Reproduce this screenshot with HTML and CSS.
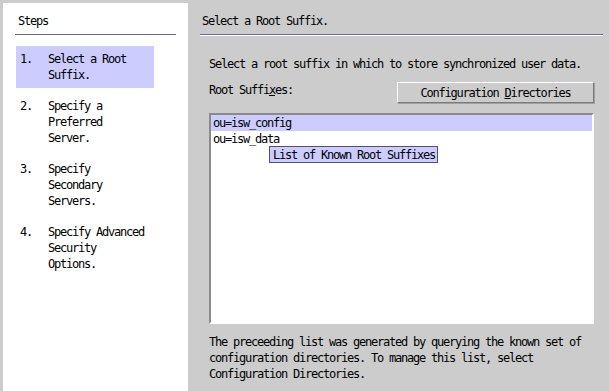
FILE: index.html
```html
<!DOCTYPE html>
<html>
<head>
<meta charset="utf-8">
<link rel="stylesheet" href="styles.css">
</head>
<body>
<div class="app">
  <aside class="steps">
    <div class="steps-head">Steps</div>
    <ol class="step-list">
      <li class="step current"><span class="num">1.</span><span class="label">Select a Root Suffix.</span></li>
      <li class="step"><span class="num">2.</span><span class="label">Specify a Preferred Server.</span></li>
      <li class="step"><span class="num">3.</span><span class="label">Specify Secondary Servers.</span></li>
      <li class="step"><span class="num">4.</span><span class="label">Specify Advanced Security Options.</span></li>
    </ol>
  </aside>
  <main class="main">
    <div class="main-head">Select a Root Suffix.</div>
    <div class="content">
      <p class="intro">Select a root suffix in which to store synchronized user data.</p>
      <div class="row">
        <span class="field-label">Root Suffi<u>x</u>es:</span>
        <button class="btn">Configuration <u>D</u>irectories</button>
      </div>
      <div class="list">
        <div class="item selected">ou=isw_config</div>
        <div class="item">ou=isw_data</div>
        <div class="tooltip">List of Known Root Suffixes</div>
      </div>
      <p class="note">The preceeding list was generated by querying the known set of<br>configuration directories. To manage this list, select<br>Configuration Directories.</p>
    </div>
  </main>
</div>
</body>
</html>
```
FILE: styles.css
```css
html, body {
  margin: 0;
  padding: 0;
  height: 391px;
  overflow: hidden;
  background: #cccccc;
}
body {
  font-family: "DejaVu Sans Mono", monospace;
  font-size: 12px;
  letter-spacing: -1.225px;
  line-height: 16px;
  color: #000;
}
.app {
  display: flex;
  height: 391px;
}
.steps {
  width: 185px;
  margin: 3px 0 0 3px;
  background: #ffffff;
}
.steps-head {
  margin: 0 12px;
  padding: 10px 3px 5px;
  border-bottom: 1px solid #666699;
}
.step-list {
  list-style: none;
  margin: 11px 0 0 13px;
  padding: 0;
  width: 138px;
}
.step {
  display: flex;
  padding: 5px 8px 5px 4px;
  margin-bottom: 5px;
}
.step.current {
  background: #ccccff;
}
.num {
  width: 28px;
  flex: none;
}
.label {
  width: 99px;
}
.main {
  flex: 1;
  display: flex;
  flex-direction: column;
}
.main-head {
  margin: 0 6px 0 12px;
  padding: 13px 2px 5px;
  border-bottom: 1px solid #666699;
  box-shadow: 0 1px 0 #ffffff;
}
.content {
  padding: 21px 15px 0 21px;
  display: flex;
  flex-direction: column;
}
.intro {
  margin: 0;
}
.row {
  display: flex;
  justify-content: space-between;
  align-items: flex-start;
  margin-top: 10px;
}
.field-label {
  margin-top: 0;
}
.btn {
  width: 197px;
  height: 21px;
  margin: 0;
  padding: 0;
  font: inherit;
  letter-spacing: inherit;
  color: #000;
  background: #cccccc;
  border: 1px solid;
  border-color: #ffffff #7a7a7a #7a7a7a #ffffff;
  box-shadow: 1px 1px 0 #a0a0a0;
}
.list {
  position: relative;
  margin-top: 10px;
  height: 207px;
  background: #ffffff;
  border: 2px solid;
  border-color: #8a8a8a #ffffff #ffffff #8a8a8a;
  padding: 0;
}
.item {
  padding-left: 2px;
  height: 16px;
}
.item.selected {
  background: #ccccff;
}
.tooltip {
  position: absolute;
  left: 58px;
  top: 31px;
  height: 15px;
  width: 164px;
  padding: 0 0 0 3px;
  line-height: 16px;
  background: #ccccff;
  border: 1px solid #505070;
}
.note {
  margin: 10px 0 0;
}
```
